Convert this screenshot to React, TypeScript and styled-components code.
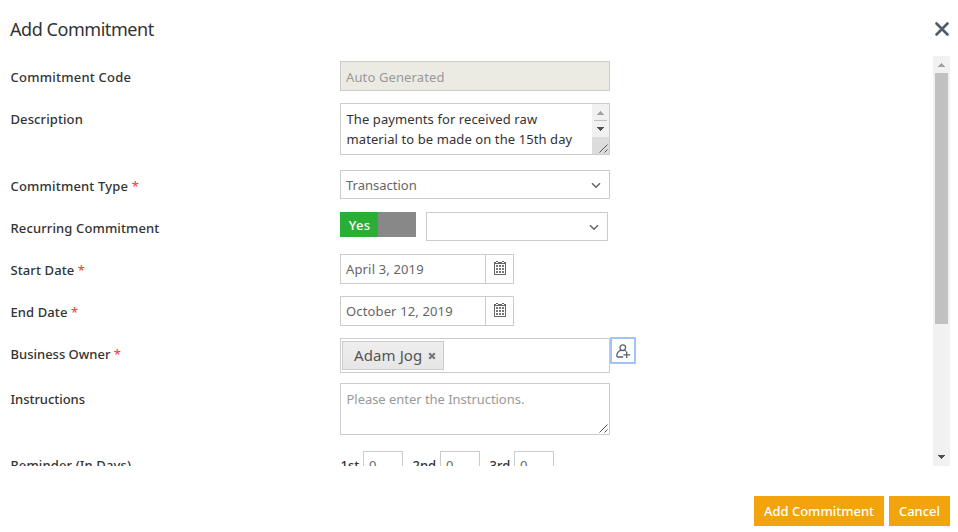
import React from "react";
import styled, { createGlobalStyle } from "styled-components";

const GlobalStyle = createGlobalStyle`
  * { box-sizing: border-box; }
  body { margin: 0; background: #fff; overflow: hidden; }
  svg { display: block; flex: none; }
`;

const Dialog = styled.div`
  width: 958px;
  height: 532px;
  display: flex;
  flex-direction: column;
  background: #fff;
  color: #333;
  font-family: "Noto Sans", "Open Sans", sans-serif;
  font-size: 13px;
  white-space: nowrap;
`;

const Header = styled.header`
  height: 56px;
  padding: 0 8px 0 10px;
  display: flex;
  align-items: center;
  justify-content: space-between;
`;

const Title = styled.h1`
  margin: 1px 0 0;
  font-size: 18px;
  line-height: 26px;
  font-weight: 400;
  letter-spacing: -0.45px;
`;

const CloseIcon = styled.svg`
  margin-top: 1px;
`;

const Scroller = styled.main`
  height: 410px;
  margin: 0 8px 0 10px;
  display: flex;
  justify-content: space-between;
  overflow: hidden;
`;

const Form = styled.form`
  width: 700px;
  padding-top: 5px;
`;

const Row = styled.div<{ $h: number; $gap: number }>`
  display: flex;
  align-items: flex-start;
  height: ${(p) => p.$h}px;
  margin-bottom: ${(p) => p.$gap}px;
`;

const Label = styled.label<{ $ls?: number; $lh?: number }>`
  width: 330px;
  padding-left: 0.5px;
  line-height: ${(p) => p.$lh ?? 32}px;
  font-weight: 500;
  letter-spacing: ${(p) => p.$ls ?? 0}px;
`;

const Star = styled.span`
  color: #f33;
  font-weight: 400;
`;

const Field = styled.div<{ $w: number; $h: number; $disabled?: boolean; $color?: string; $ls?: number }>`
  width: ${(p) => p.$w}px;
  height: ${(p) => p.$h}px;
  border: 1px solid #ccc;
  background: ${(p) => (p.$disabled ? "#ebebe4" : "#fff")};
  color: ${(p) => p.$color ?? "#666"};
  letter-spacing: ${(p) => p.$ls ?? 0}px;
  padding-left: 5px;
  padding-top: ${(p) => (p.$disabled ? 2 : 0)}px;
  display: flex;
  align-items: center;
  justify-content: space-between;
`;

const Area = styled(Field)`
  height: 52px;
  align-items: stretch;
`;

const AreaText = styled.div`
  padding: 5px 0 0 0.5px;
  line-height: 20px;
`;

const Corner = styled.div`
  align-self: flex-end;
`;

const Chevron = styled.span`
  padding: 2px 8px 0 0;
`;

const Switch = styled.div`
  width: 76px;
  height: 25px;
  margin-right: 10px;
  background: #888;
`;

const SwitchOn = styled.div`
  width: 38px;
  height: 25px;
  padding-left: 1px;
  background: #2bae35;
  color: #fff;
  font-size: 13px;
  font-weight: 500;
  letter-spacing: 0.2px;
  line-height: 26px;
  text-align: center;
`;

const DateButton = styled.span`
  width: 28px;
  height: 28px;
  border-left: 1px solid #ccc;
  padding: 6px 0 0 8px;
`;

const OwnerField = styled(Field)`
  padding-left: 1px;
`;

const Tag = styled.span`
  width: 102px;
  height: 29px;
  padding: 0 7px 0 11px;
  display: flex;
  align-items: center;
  justify-content: space-between;
  border: 1px solid #ccc;
  background: linear-gradient(#eee, #e6e6e6);
  color: #555;
  font-size: 15px;
  line-height: 26px;
`;

const TagLabel = styled.span`
  margin-top: -1px;
  letter-spacing: 0.1px;
`;

const PersonButton = styled.span`
  width: 26px;
  height: 27px;
  margin-top: -1px;
  border: 2px solid #a2c2fb;
  border-radius: 1px;
  padding: 5px 0 0 4px;
`;

const Ordinal = styled.span<{ $w: number }>`
  width: ${(p) => p.$w}px;
  padding-left: 0.5px;
  line-height: 29px;
  font-weight: 500;
`;

const DayInput = styled(Field)`
  margin-right: 9px;
  line-height: 20px;
  align-items: flex-start;
  padding-top: 3px;
`;

const ScrollTrack = styled.div`
  width: 17px;
  height: 410px;
  background: #f1f1f1;
  display: flex;
  flex-direction: column;
  align-items: center;
`;

const ScrollThumb = styled.div`
  width: 13px;
  height: 251px;
  background: #c1c1c1;
  margin-bottom: auto;
`;

const Footer = styled.footer`
  display: flex;
  justify-content: flex-end;
  gap: 5px;
  padding: 30px 8px 0 0;
`;

const Action = styled.button<{ $w: number }>`
  width: ${(p) => p.$w}px;
  height: 30px;
  padding: 0;
  border: 0;
  background: #f3a30c;
  color: #fff;
  font: 500 13px/30px "Noto Sans", "Open Sans", sans-serif;
`;

const ArrowBox = ({ up = false, color }: { up?: boolean; color: string }) => (
  <svg width="17" height="17" viewBox="0 0 17 17" shapeRendering="crispEdges">
    <path d={up ? "M8 7h1v1h1v1h1v1h1v1H5v-1h1V9h1V8h1z" : "M5 6h7v1h-1v1h-1v1H9v1H8V9H7V8H6V7H5z"} fill={color} />
  </svg>
);

const Grip = () => (
  <svg width="17" height="17" viewBox="0 0 17 17">
    <path d="M7.5 15.5l8-8M12.5 15.5l3-3" stroke="#555" fill="none" />
  </svg>
);

const TextScroll = () => (
  <svg width="17" height="50" viewBox="0 0 17 50">
    <path fill="#f1f1f1" d="M0 0h17v33H0z" />
    <path fill="#dcdcdc" d="M0 33h17v17H0z" />
    <g shapeRendering="crispEdges">
      <path fill="#a3a3a3" d="M8 7h1v1h1v1h1v1h1v1H5v-1h1V9h1V8h1z" />
      <path fill="#c1c1c1" d="M2 16h13v1H2z" />
      <path fill="#505050" d="M5 23h7v1h-1v1h-1v1H9v1H8v-1H7v-1H6v-1H5z" />
    </g>
    <path d="M7.5 48.5l8-8M12.5 48.5l3-3" stroke="#555" fill="none" />
  </svg>
);

const ChevronIcon = () => (
  <Chevron>
    <svg width="10" height="7" viewBox="0 0 10 7">
      <path d="M1 1.2l4 4 4-4" fill="none" stroke="#666" strokeWidth="1.5" />
    </svg>
  </Chevron>
);

const Calendar = () => (
  <DateButton>
    <svg width="12" height="14" viewBox="0 0 12 14" shapeRendering="crispEdges">
      <path fill="#666" fillRule="evenodd" d="M0 1h12v13H0zM1 3v10h10V3z" />
      <path fill="#666" d="M2 0h2v1H2zM8 0h2v1H8z" />
      <path fill="#fff" d="M2 1h2v1H2zM8 1h2v1H8z" />
      <path fill="#777" d="M2 4h2v2H2zM5 4h2v2H5zM8 4h2v2H8zM2 7h2v2H2zM5 7h2v2H5zM8 7h2v2H8zM2 10h2v2H2zM5 10h2v2H5zM8 10h2v2H8z" />
    </svg>
  </DateButton>
);

const Req = () => <Star> *</Star>;

export default function App() {
  return (
    <Dialog>
      <GlobalStyle />
      <Header>
        <Title>Add Commitment</Title>
        <CloseIcon width="16" height="16" viewBox="0 0 16 16">
          <path d="M2.5 2.5l11 11M13.5 2.5l-11 11" stroke="#535c6c" strokeWidth="2.7" strokeLinecap="round" />
        </CloseIcon>
      </Header>
      <Scroller>
        <Form>
          <Row $h={30} $gap={12}>
            <Label $ls={0.23}>Commitment Code</Label>
            <Field $w={270} $h={30} $disabled $color="#999" $ls={0.12}>Auto Generated</Field>
          </Row>
          <Row $h={52} $gap={15}>
            <Label $ls={0.1}>Description</Label>
            <Area $w={270} $h={52} $color="#333" $ls={0.09}>
              <AreaText>The payments for received raw<br />material to be made on the 15th day</AreaText>
              <TextScroll />
            </Area>
          </Row>
          <Row $h={29} $gap={13}>
            <Label $ls={0.18}>Commitment Type<Req /></Label>
            <Field $w={270} $h={29}>Transaction<ChevronIcon /></Field>
          </Row>
          <Row $h={29} $gap={13}>
            <Label $ls={0.12}>Recurring Commitment</Label>
            <Switch><SwitchOn>Yes</SwitchOn></Switch>
            <Field $w={182} $h={29}><span /><ChevronIcon /></Field>
          </Row>
          <Row $h={30} $gap={12}>
            <Label $ls={0.1}>Start Date<Req /></Label>
            <Field $w={174} $h={30} $ls={0.15}>April 3, 2019<Calendar /></Field>
          </Row>
          <Row $h={30} $gap={12}>
            <Label $ls={0.1}>End Date<Req /></Label>
            <Field $w={174} $h={30} $ls={0.14}>October 12, 2019<Calendar /></Field>
          </Row>
          <Row $h={35} $gap={10}>
            <Label>Business Owner<Req /></Label>
            <OwnerField $w={270} $h={35}>
              <Tag>
                <TagLabel>Adam Jog</TagLabel>
                <svg width="8" height="8" viewBox="0 0 8 8">
                  <path d="M1.2 1.2l5.6 5.6M6.8 1.2L1.2 6.8" stroke="#777" strokeWidth="2.2" />
                </svg>
              </Tag>
            </OwnerField>
            <PersonButton>
              <svg width="16" height="15" viewBox="0 0 16 15" fill="none" stroke="#5a6170" strokeWidth="1.3">
                <circle cx="6.8" cy="3.7" r="2.8" />
                <path d="M5.3 6.2C2.4 7.2 .7 9.2 .8 12q.1 1 1 1h5.4M8.3 6.2l1.8 1.1M10.7 7.6v6.4M7.4 10.8h6.8" />
              </svg>
            </PersonButton>
          </Row>
          <Row $h={52} $gap={16}>
            <Label $ls={-0.04}>Instructions</Label>
            <Area $w={270} $h={52} $color="#999" $ls={-0.04}>
              <AreaText>Please enter the Instructions.</AreaText>
              <Corner><Grip /></Corner>
            </Area>
          </Row>
          <Row $h={30} $gap={0}>
            <Label $ls={0.12} $lh={29}>Reminder (In Days)</Label>
            <Ordinal $w={23}>1st</Ordinal>
            <DayInput $w={40} $h={30}>0</DayInput>
            <Ordinal $w={28}>2nd</Ordinal>
            <DayInput $w={40} $h={30}>0</DayInput>
            <Ordinal $w={25}>3rd</Ordinal>
            <DayInput $w={40} $h={30}>0</DayInput>
          </Row>
        </Form>
        <ScrollTrack>
          <ArrowBox up color="#a3a3a3" />
          <ScrollThumb />
          <ArrowBox color="#505050" />
        </ScrollTrack>
      </Scroller>
      <Footer>
        <Action $w={130}>Add Commitment</Action>
        <Action $w={61}>Cancel</Action>
      </Footer>
    </Dialog>
  );
}
